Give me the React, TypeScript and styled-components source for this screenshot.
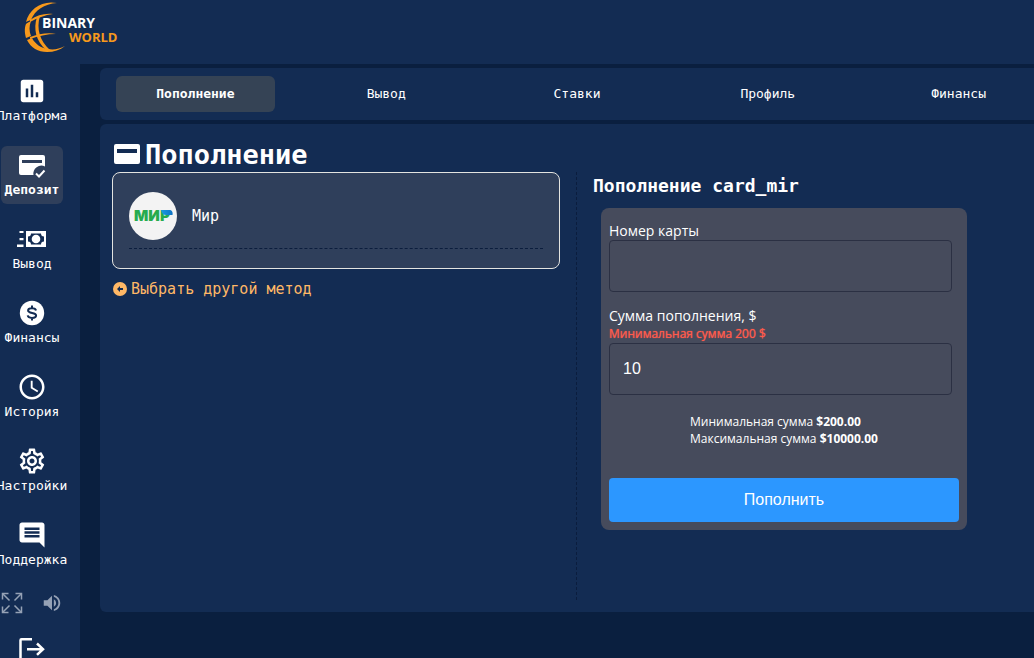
import React from "react";
import styled, { createGlobalStyle, css } from "styled-components";
import {
  MdInsertChart,
  MdAccessTime,
  MdOutlineSettings,
  MdComment,
  MdVolumeUp,
} from "react-icons/md";

const colors = {
  page: "#0a1f3f",
  panel: "#132c53",
  active: "#2f3f5b",
  tab: "#354355",
  form: "#464b5c",
  line: "#0b1d3d",
  accent: "#ffb866",
  error: "#ff5b4d",
  primary: "#2c97ff",
};

const mono = '"DejaVu Sans Mono", "Liberation Mono", monospace';
const sans = '"Open Sans", "Noto Sans", sans-serif';

const GlobalStyle = createGlobalStyle`
  *, *::before, *::after { box-sizing: border-box; }
  html, body { margin: 0; overflow: hidden; }
  body {
    background: ${colors.page};
    color: #fff;
    font-family: ${mono};
    font-size: 13px;
  }
`;

const Page = styled.div`
  display: flex;
  flex-direction: column;
  height: 100vh;
  overflow: hidden;
`;

const Header = styled.header`
  flex: none;
  height: 64px;
  padding-left: 24px;
  background: ${colors.panel};
`;

const LogoLink = styled.a`
  display: block;
  width: 96px;
`;

const Body = styled.div`
  display: flex;
  flex: 1;
  min-height: 0;
`;

const Sidebar = styled.nav`
  display: flex;
  flex: none;
  flex-direction: column;
  gap: 16px;
  width: 80px;
  padding: 8px 17px 0 1px;
  background: ${colors.panel};
`;

const NavItem = styled.a<{ $active?: boolean }>`
  display: flex;
  flex: none;
  flex-direction: column;
  align-items: center;
  height: 58px;
  padding-top: 4px;
  border-radius: 6px;
  color: #fff;
  line-height: 20px;
  text-decoration: none;
  white-space: nowrap;
  ${(p) =>
    p.$active &&
    css`
      background: ${colors.active};
      font-weight: 700;
    `}
  svg { display: block; flex: none; }
`;

const Tools = styled.div`
  display: flex;
  flex: none;
  align-items: flex-start;
  justify-content: center;
  gap: 18px;
  height: 28px;
  padding-top: 2px;
`;

const ToolButton = styled.button`
  display: flex;
  align-items: center;
  justify-content: center;
  width: 22px;
  padding: 0;
  border: 0;
  background: none;
  color: #95a1b5;
  svg { flex: none; }
`;

const LogoutLink = styled.a`
  display: flex;
  justify-content: center;
  color: #fff;
`;

const Main = styled.main`
  display: flex;
  flex: 1;
  flex-direction: column;
  gap: 4px;
  min-width: 0;
  margin-right: -20px;
  padding: 4px 0 0 20px;
`;

const Tabs = styled.nav`
  display: flex;
  gap: 32px;
  padding: 8px 16px;
  border-radius: 6px;
  background: ${colors.panel};
`;

const Tab = styled.a<{ $active?: boolean }>`
  flex: 1 1 0;
  border-radius: 6px;
  background: ${(p) => (p.$active ? colors.tab : "transparent")};
  color: #fff;
  font-weight: ${(p) => (p.$active ? 700 : 400)};
  line-height: 36px;
  text-align: center;
  text-decoration: none;
`;

const Panel = styled.section`
  padding: 12px;
  border-radius: 6px;
  background: ${colors.panel};
`;

const Title = styled.h1`
  display: flex;
  align-items: center;
  gap: 5px;
  margin: 0;
  padding: 2px 0 0 2px;
  font-size: 27px;
  line-height: 34px;
`;

const Columns = styled.div`
  display: grid;
  grid-template-columns: 1fr 1fr;
  min-height: 428px;
`;

const Methods = styled.div`
  padding-right: 16px;
  border-right: 1px dashed ${colors.line};
`;

const MethodCard = styled.div`
  padding: 19px 16px;
  border: 1px solid #e4e4e0;
  border-radius: 8px;
  background: ${colors.active};
`;

const MethodRow = styled.div`
  display: flex;
  align-items: center;
  gap: 15px;
  padding-bottom: 8px;
  border-bottom: 1px dashed ${colors.line};
  font-size: 15px;
`;

const Avatar = styled.span`
  display: flex;
  align-items: center;
  justify-content: center;
  width: 48px;
  height: 48px;
  border-radius: 50%;
  background: #f3f3f3;
`;

const BackLink = styled.a`
  display: inline-flex;
  align-items: center;
  gap: 4px;
  margin-top: 10px;
  padding-left: 1px;
  color: ${colors.accent};
  font-size: 15px;
  line-height: 20px;
  text-decoration: none;
`;

const Payment = styled.div`
  padding-left: 16px;
`;

const Subtitle = styled.h2`
  margin: 0 0 8px;
  font-size: 18px;
  line-height: 28px;
`;

const Form = styled.form`
  display: flex;
  flex-direction: column;
  max-width: 366px;
  margin-left: 8px;
  padding: 14px 8px 8px;
  border-radius: 8px;
  background: ${colors.form};
  font-family: ${sans};
`;

const Field = styled.div`
  display: flex;
  flex-direction: column;
  margin: 0 7px 15px 0;
`;

const Label = styled.label`
  font-size: 14px;
  line-height: 18px;
`;

const ErrorText = styled.span`
  color: ${colors.error};
  font-size: 12px;
  line-height: 18px;
  text-shadow: 0 0 1px ${colors.error};
`;

const Input = styled.input`
  height: 52px;
  padding: 0 13px;
  border: 1px solid #2b3043;
  border-radius: 4px;
  outline: 0;
  background: transparent;
  color: #fff;
  font: 16px "Liberation Sans", Arial, sans-serif;
`;

const Limits = styled.p`
  align-self: center;
  margin: 3px 0 31px;
  font-size: 12px;
  line-height: 17px;
`;

const Submit = styled.button`
  height: 44px;
  border: 0;
  border-radius: 4px;
  background: ${colors.primary};
  color: #fff;
  font: 16px "Liberation Sans", Arial, sans-serif;
`;

const Logo = () => (
  <svg width="96" height="56" viewBox="0 0 96 56" role="img" aria-label="Binary World">
    <g fill="#f7991c">
      <path d="M33 3C18 0 5 9 2 22c2-1 4-2 5-2C11 10 20 4 33 3z" />
      <path d="M2 24c-2 5-1 10 0 14l5-2c-2-5-2-10 0-15-2 1-4 2-5 3z" />
      <path d="M3 40c4 8 11 12 20 12 7 0 13-2 18-6-6 3-11 4-17 3C17 48 11 44 8 38z" />
      <path d="M6 20c7-5 15-7 23-6-8 1-16 4-23 8z" />
      <path d="M6 37c9-3 18-5 26-3-9 0-18 2-26 5z" />
      <path d="M13 17c-4 12-1 24 9 33h4C16 41 12 29 16 16z" />
    </g>
    <text x="18" y="28" fill="#fff" fontFamily="Open Sans" fontWeight="700" fontSize="14">BINARY</text>
    <text x="45" y="42" fill="#f7991c" fontFamily="Open Sans" fontWeight="700" fontSize="13">WORLD</text>
  </svg>
);

const DepositIcon = () => (
  <svg width="30" height="30" viewBox="0 0 30 30" fill="none">
    <path
      fill="#fff"
      fillRule="evenodd"
      d="M4 5h22a2 2 0 0 1 2 2v9.500a8 8 0 0 0-11.500 8.500H4a2 2 0 0 1-2-2V7a2 2 0 0 1 2-2zm1 5v3h20v-3z"
    />
    <path d="M19 23.500l3 3 5.500-6" stroke="#fff" strokeWidth="2" />
  </svg>
);

const WithdrawIcon = () => (
  <svg width="30" height="30" viewBox="0 0 30 30" fill="#fff">
    <path
      fillRule="evenodd"
      d="M9 7h20v16H9zm5 2.500a3 3 0 0 1-3 3v5a3 3 0 0 1 3 3h10a3 3 0 0 1 3-3v-5a3 3 0 0 1-3-3z"
    />
    <circle cx="19" cy="15" r="4.300" />
    <path d="M2.500 7h4v2h-4zM2.500 14h4v2.200h-4zM0 20.500h6.500V23H0z" />
  </svg>
);

const DollarIcon = () => (
  <svg width="30" height="30" viewBox="0 0 30 30" fill="none">
    <circle cx="15" cy="15" r="12.200" fill="#fff" />
    <path
      d="M15 7.500v3M15 19.500v3M19 12.500c-.3-1.400-1.700-2.200-4-2.200-2.500 0-3.900.9-3.900 2.300 0 3.400 8 1.500 8 4.900 0 1.500-1.500 2.400-4.100 2.400-2.500 0-4-.9-4.300-2.500"
      stroke={colors.panel}
      strokeWidth="2"
    />
  </svg>
);

const LogoutIcon = () => (
  <svg width="30" height="30" viewBox="0 0 30 30" fill="none" stroke="currentColor" strokeWidth="2.500">
    <path d="M15 5.200H4.500a1 1 0 0 0-1 1v18a1 1 0 0 0 1 1H15" />
    <path d="M10 15.200h15M20 9.500l6 5.700-6 5.700" />
  </svg>
);

const ExpandIcon = () => (
  <svg width="22" height="22" viewBox="0 0 22 22" fill="none" stroke="currentColor" strokeWidth="1.500">
    <path d="M7.500 1.500h-6v6M14.500 1.500h6v6M7.500 20.500h-6v-6M14.500 20.500h6v-6" />
    <path d="M1.500 1.500l7 7M20.500 1.500l-7 7M1.500 20.500l7-7M20.500 20.500l-7-7" />
  </svg>
);

const CardIcon = () => (
  <svg width="26" height="22" viewBox="0 0 26 22">
    <path
      fill="#fff"
      fillRule="evenodd"
      d="M2 0h22a2 2 0 0 1 2 2v16a2 2 0 0 1-2 2H2a2 2 0 0 1-2-2V2a2 2 0 0 1 2-2zm1 5v4h20V5z"
    />
  </svg>
);

const BackIcon = () => (
  <svg width="14" height="14" viewBox="0 0 14 14">
    <circle cx="7" cy="7" r="7" fill={colors.accent} />
    <path d="M4 7l3-3v2h3v2H7v2z" fill={colors.panel} />
  </svg>
);

const MirLogo = () => (
  <svg width="40" height="16" viewBox="0 0 40 16" role="img" aria-label="Мир">
    <defs>
      <linearGradient id="mirBlue" x1="0" x2="1">
        <stop offset="0" stopColor="#1b9be0" />
        <stop offset="1" stopColor="#0f73c4" />
      </linearGradient>
    </defs>
    <text x="1" y="13" fill="#27ab4e" fontFamily="Inter" fontWeight="900" fontSize="15">МИР</text>
    <path d="M28 2h8c3 0 4 2 3.500 5H33c-2.500 0-4.500-2-5-5z" fill="url(#mirBlue)" />
  </svg>
);

const navItems = [
  { label: "Платформа", icon: <MdInsertChart size={30} /> },
  { label: "Депозит", icon: <DepositIcon />, active: true },
  { label: "Вывод", icon: <WithdrawIcon /> },
  { label: "Финансы", icon: <DollarIcon /> },
  { label: "История", icon: <MdAccessTime size={30} /> },
  { label: "Настройки", icon: <MdOutlineSettings size={30} /> },
  { label: "Поддержка", icon: <MdComment size={30} /> },
];

const tabs = ["Пополнение", "Вывод", "Ставки", "Профиль", "Финансы"];

export default function App() {
  return (
    <Page>
      <GlobalStyle />
      <Header>
        <LogoLink href="#">
          <Logo />
        </LogoLink>
      </Header>
      <Body>
        <Sidebar>
          {navItems.map((item) => (
            <NavItem key={item.label} href="#" $active={item.active}>
              {item.icon}
              {item.label}
            </NavItem>
          ))}
          <Tools>
            <ToolButton type="button" aria-label="Полный экран">
              <ExpandIcon />
            </ToolButton>
            <ToolButton type="button" aria-label="Звук">
              <MdVolumeUp size={22} />
            </ToolButton>
          </Tools>
          <LogoutLink href="#" aria-label="Выход">
            <LogoutIcon />
          </LogoutLink>
        </Sidebar>
        <Main>
          <Tabs>
            {tabs.map((tab, i) => (
              <Tab key={tab} href="#" $active={i === 0}>
                {tab}
              </Tab>
            ))}
          </Tabs>
          <Panel>
            <Title>
              <CardIcon />
              Пополнение
            </Title>
            <Columns>
              <Methods>
                <MethodCard>
                  <MethodRow>
                    <Avatar>
                      <MirLogo />
                    </Avatar>
                    Мир
                  </MethodRow>
                </MethodCard>
                <BackLink href="#">
                  <BackIcon />
                  Выбрать другой метод
                </BackLink>
              </Methods>
              <Payment>
                <Subtitle>Пополнение card_mir</Subtitle>
                <Form onSubmit={(e) => e.preventDefault()}>
                  <Field>
                    <Label htmlFor="card">Номер карты</Label>
                    <Input id="card" type="text" />
                  </Field>
                  <Field>
                    <Label htmlFor="amount">Сумма пополнения, $</Label>
                    <ErrorText>Минимальная сумма 200 $</ErrorText>
                    <Input id="amount" type="text" defaultValue="10" />
                  </Field>
                  <Limits>
                    Минимальная сумма <b>$200.00</b>
                    <br />
                    Максимальная сумма <b>$10000.00</b>
                  </Limits>
                  <Submit type="submit">Пополнить</Submit>
                </Form>
              </Payment>
            </Columns>
          </Panel>
        </Main>
      </Body>
    </Page>
  );
}
